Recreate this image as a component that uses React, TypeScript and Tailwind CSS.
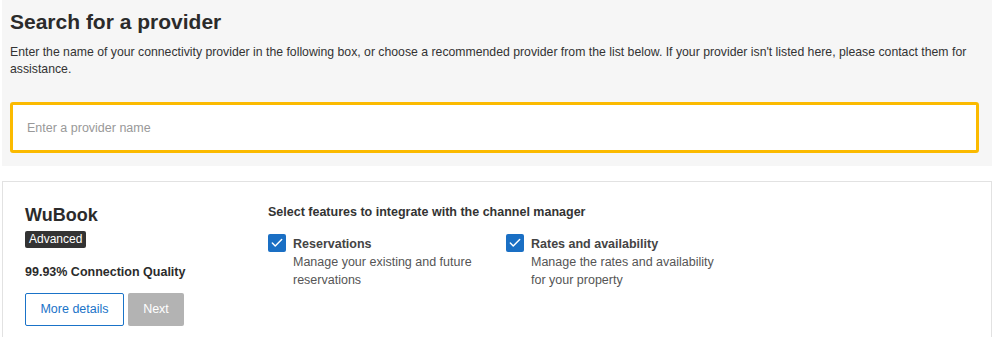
import { Check } from "lucide-react";

function Feature({ title, desc }: { title: string; desc: string }) {
  return (
    <label className="flex gap-[7px] items-start w-[238px]">
      <span className="w-[18px] h-[18px] rounded-[2px] bg-[#1a6fc4] flex items-center justify-center shrink-0 -mt-[1px]">
        <Check className="w-[14px] h-[14px] text-white" strokeWidth={2.5} />
      </span>
      <span className="flex flex-col w-[190px]">
        <span className="text-[12.5px] font-bold text-[#444] leading-[18px]">{title}</span>
        <span className="text-[12.5px] text-[#555] leading-[18px]">{desc}</span>
      </span>
    </label>
  );
}

export default function App() {
  return (
    <div className="w-[999px] h-[337px] overflow-hidden bg-white font-['Liberation_Sans',Arial,sans-serif] text-[#333]">
      <section className="ml-[2px] w-[990px] h-[166px] bg-[#f6f6f6] pt-[9px] px-[8px]">
        <h1 className="text-[21px] font-bold leading-[26px] text-[#2b2b2b]">Search for a provider</h1>
        <p className="mt-[9px] text-[12.25px] leading-[17px] text-[#333]">
          Enter the name of your connectivity provider in the following box, or choose a recommended provider from the
          list below. If your provider isn't listed here, please contact them for assistance.
        </p>
        <input
          className="mt-[24px] w-[969px] h-[51px] bg-white border-[3px] border-[#fbba00] rounded-[3px] px-[14px] text-[12.5px] outline-none placeholder:text-[#999]"
          placeholder="Enter a provider name"
        />
      </section>
      <section className="ml-[2px] mt-[15px] w-[990px] h-[200px] border border-[#e2e2e2] flex pt-[22px] pl-[22px]">
        <div className="w-[243px] shrink-0">
          <h2 className="text-[18px] font-bold leading-[22px] text-[#2b2b2b]">WuBook</h2>
          <span className="inline-block mt-[2px] bg-[#333] text-white text-[12px] leading-[17px] px-[4px] rounded-[2px]">
            Advanced
          </span>
          <div className="mt-[14px] text-[12.5px] font-bold leading-[17px] text-[#2b2b2b]">99.93% Connection Quality</div>
          <div className="mt-[12px] flex gap-[4px]">
            <button className="h-[33px] w-[99px] border border-[#1a73c8] rounded-[2px] text-[12.5px] text-[#1a73c8] bg-white">
              More details
            </button>
            <button className="h-[33px] w-[56px] rounded-[2px] text-[12.5px] text-white bg-[#b3b3b3]">Next</button>
          </div>
        </div>
        <div>
          <div className="text-[12.5px] font-bold leading-[17px] text-[#333]">
            Select features to integrate with the channel manager
          </div>
          <div className="mt-[14px] flex">
            <Feature title="Reservations" desc="Manage your existing and future reservations" />
            <Feature title="Rates and availability" desc="Manage the rates and availability for your property" />
          </div>
        </div>
      </section>
    </div>
  );
}
